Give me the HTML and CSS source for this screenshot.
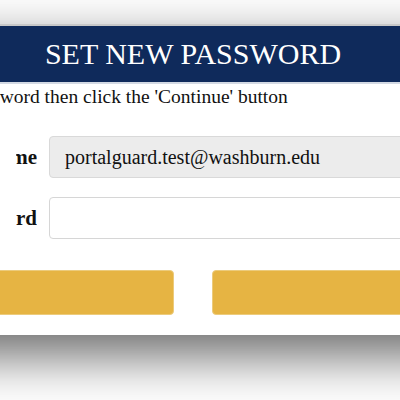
FILE: index.html
```html
<!DOCTYPE html>
<html>
<head>
<meta charset="utf-8">
<link rel="stylesheet" href="styles.css">
</head>
<body>
<div class="stage">
  <div class="card">
    <div class="header">SET NEW PASSWORD</div>
    <p class="intro">Enter your new password then click the 'Continue' button</p>
    <div class="form">
      <div class="row">
        <div class="label-cell"><label class="label">Username</label></div>
        <div class="input readonly">portalguard.test@washburn.edu</div>
      </div>
      <div class="row">
        <div class="label-cell"><label class="label">Password</label></div>
        <div class="input"></div>
      </div>
    </div>
    <div class="buttons">
      <div class="btn"></div>
      <div class="btn"></div>
    </div>
  </div>
</div>
</body>
</html>
```

FILE: styles.css
```css
html, body {
  margin: 0;
  padding: 0;
  background: #ffffff;
  overflow: hidden;
  width: 400px;
  height: 400px;
}
.stage {
  padding-top: 24px;
  width: 400px;
  height: 400px;
}
.card {
  margin-left: -200px;
  width: 786px;
  background: #ffffff;
  border-top: 2px solid #c8c8c8;
  box-shadow: 0 20px 50px rgba(0, 0, 0, 0.6);
  font-family: "Liberation Serif", "Times New Roman", serif;
  color: #111111;
  padding-bottom: 20px;
}
.header {
  box-sizing: border-box;
  height: 58px;
  background: #0f2a5b;
  border-bottom: 2px solid #d3d9e3;
  color: #ffffff;
  font-family: "Liberation Serif", "Times New Roman", serif;
  font-size: 30px;
  line-height: 56px;
  text-align: center;
}
.intro {
  margin: 1px 0 0 0;
  padding-left: 41px;
  font-family: "Liberation Serif", "Times New Roman", serif;
  font-size: 19.5px;
  line-height: 24px;
  white-space: nowrap;
}
.form {
  display: flex;
  flex-direction: column;
  gap: 19px;
  margin-top: 27px;
}
.row {
  display: flex;
  align-items: center;
  padding-left: 216px;
  padding-right: 41px;
}
.label-cell {
  width: 21px;
  margin-right: 12px;
  overflow: hidden;
  display: flex;
  justify-content: flex-end;
}
.label {
  flex: none;
  white-space: nowrap;
  font-family: "Liberation Serif", "Times New Roman", serif;
  font-weight: bold;
  font-size: 21px;
  color: #111111;
}
.input {
  flex: 1;
  height: 42px;
  box-sizing: border-box;
  border: 1px solid #d6d6d6;
  border-radius: 4px;
  background: #ffffff;
  font-family: "Liberation Serif", "Times New Roman", serif;
  font-size: 20px;
  padding-left: 15px;
  display: flex;
  align-items: center;
  color: #111111;
}
.input.readonly {
  background: #ececec;
  border-color: #d9d9d9;
}
.buttons {
  display: flex;
  gap: 38px;
  padding: 0 41px;
  margin-top: 31px;
}
.btn {
  flex: 1;
  height: 45px;
  box-sizing: border-box;
  background: #e6b443;
  border: 1px solid #eccb7c;
  border-radius: 4px;
}
```
